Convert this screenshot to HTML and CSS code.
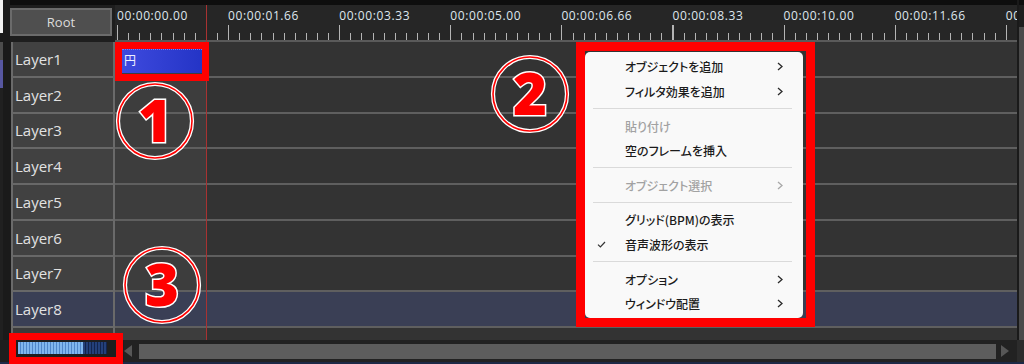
FILE: index.html
```html
<!DOCTYPE html>
<html lang="ja">
<head>
<meta charset="utf-8">
<title>Timeline</title>
<link rel="stylesheet" href="styles.css">
</head>
<body>
<div class="app">
  <div class="header">
    <div class="edge edge-top"></div>
    <div class="root-cell"><div class="root-btn">Root</div></div>
    <div class="ruler">
      <div class="ruler-labels">
        <span>00:00:00.00</span><span>00:00:01.66</span><span>00:00:03.33</span><span>00:00:05.00</span><span>00:00:06.66</span><span>00:00:08.33</span><span>00:00:10.00</span><span>00:00:11.66</span><span>00:00:13.33</span>
      </div>
    </div>
    <div class="vs vs-top"></div>
  </div>

  <div class="body">
    <div class="edge edge-body"></div>
    <div class="tracks">
      <div class="row"><div class="label">Layer1</div><div class="track"><div class="clip">円</div></div></div>
      <div class="row"><div class="label">Layer2</div><div class="track"></div></div>
      <div class="row"><div class="label">Layer3</div><div class="track"></div></div>
      <div class="row"><div class="label">Layer4</div><div class="track"></div></div>
      <div class="row"><div class="label">Layer5</div><div class="track"></div></div>
      <div class="row"><div class="label">Layer6</div><div class="track"></div></div>
      <div class="row"><div class="label">Layer7</div><div class="track"></div></div>
      <div class="row sel"><div class="label">Layer8</div><div class="track"></div></div>
      <div class="row partial"><div class="label"></div><div class="track"></div></div>
    </div>
    <div class="vs"></div>
  </div>

  <div class="hscroll">
    <div class="zoom-cell">
      <div class="zoom-bar"><span class="zoom-fill"></span><span class="zoom-rest"></span></div>
    </div>
    <div class="sb-left"></div>
    <div class="thumb"></div>
    <div class="sb-right"></div>
    <div class="sb-corner"></div>
  </div>
  <div class="bottom-line"></div>

  <div class="cursor"></div>

  <div class="mark mark-clip"></div>
  <div class="mark mark-zoom"></div>

  <div class="mark menu-frame">
    <div class="menu">
      <div class="item"><span class="check"></span><span class="text">オブジェクトを追加</span><svg class="chev" width="6" height="9" viewBox="0 0 6 9"><path d="M1 1 L5 4.5 L1 8" fill="none" stroke="#2a2a2a" stroke-width="1.3"/></svg></div>
      <div class="item"><span class="check"></span><span class="text">フィルタ効果を追加</span><svg class="chev" width="6" height="9" viewBox="0 0 6 9"><path d="M1 1 L5 4.5 L1 8" fill="none" stroke="#2a2a2a" stroke-width="1.3"/></svg></div>
      <div class="sep"></div>
      <div class="item disabled"><span class="check"></span><span class="text">貼り付け</span></div>
      <div class="item"><span class="check"></span><span class="text">空のフレームを挿入</span></div>
      <div class="sep"></div>
      <div class="item disabled"><span class="check"></span><span class="text">オブジェクト選択</span><svg class="chev" width="6" height="9" viewBox="0 0 6 9"><path d="M1 1 L5 4.5 L1 8" fill="none" stroke="#a8a8a8" stroke-width="1.3"/></svg></div>
      <div class="sep"></div>
      <div class="item"><span class="check"></span><span class="text">グリッド(BPM)の表示</span></div>
      <div class="item"><span class="check"><svg width="9" height="7" viewBox="0 0 9 7"><path d="M1 3.6 L3.4 6 L8 1" fill="none" stroke="#333" stroke-width="1.2"/></svg></span><span class="text">音声波形の表示</span></div>
      <div class="sep"></div>
      <div class="item"><span class="check"></span><span class="text">オプション</span><svg class="chev" width="6" height="9" viewBox="0 0 6 9"><path d="M1 1 L5 4.5 L1 8" fill="none" stroke="#2a2a2a" stroke-width="1.3"/></svg></div>
      <div class="item"><span class="check"></span><span class="text">ウィンドウ配置</span><svg class="chev" width="6" height="9" viewBox="0 0 6 9"><path d="M1 1 L5 4.5 L1 8" fill="none" stroke="#2a2a2a" stroke-width="1.3"/></svg></div>
    </div>
  </div>

  <svg class="badge badge-1" width="80" height="80" viewBox="0 0 80 80">
    <circle cx="40" cy="40" r="37" fill="none" stroke="#ffffff" stroke-width="4.2"/>
    <circle cx="40" cy="40" r="37" fill="none" stroke="#ff0000" stroke-width="1.6"/>
    <text x="40" y="61" text-anchor="middle" class="num">1</text>
  </svg>
  <svg class="badge badge-2" width="80" height="80" viewBox="0 0 80 80">
    <circle cx="40" cy="40" r="37" fill="none" stroke="#ffffff" stroke-width="4.2"/>
    <circle cx="40" cy="40" r="37" fill="none" stroke="#ff0000" stroke-width="1.6"/>
    <text x="40" y="61" text-anchor="middle" class="num">2</text>
  </svg>
  <svg class="badge badge-3" width="80" height="80" viewBox="0 0 80 80">
    <circle cx="40" cy="40" r="37" fill="none" stroke="#ffffff" stroke-width="4.2"/>
    <circle cx="40" cy="40" r="37" fill="none" stroke="#ff0000" stroke-width="1.6"/>
    <text x="40" y="61" text-anchor="middle" class="num">3</text>
  </svg>
</div>
</body>
</html>
```

FILE: styles.css
```css
* { box-sizing: border-box; }
html, body { margin: 0; padding: 0; }
body {
  width: 1024px;
  height: 364px;
  overflow: hidden;
  background: #1c1c1c;
  font-family: "Open Sans", "Noto Sans", sans-serif;
}
.app {
  position: relative;
  width: 1024px;
  height: 364px;
  display: flex;
  flex-direction: column;
  background: #1c1c1c;
}

/* header */
.header { height: 42px; display: flex; flex-shrink: 0; }
.edge { width: 10px; flex-shrink: 0; background: #1a1a1a; }
.edge-top {
  background:
    linear-gradient(#1a1a1a, #1a1a1a) 3px 0 / 7px 100% no-repeat,
    linear-gradient(#f2f2f2 0 33px, #1a1a1a 33px);
}
.edge-body {
  background:
    linear-gradient(#1a1a1a, #1a1a1a) 3px 0 / 7px 100% no-repeat,
    linear-gradient(#4c4c4c 0 18px, #5656a0 18px 46px, #202020 46px);
}
.root-cell {
  width: 105px;
  flex-shrink: 0;
  background: #1e1e1e;
  border-top: 5px solid #0e0e0e;
  padding-top: 3px;
}
.root-btn {
  width: 102px;
  height: 28px;
  background: #4f4f4f;
  border: 2px solid #6b6b6b;
  color: #dcdcdc;
  font-size: 13px;
  line-height: 24px;
  text-align: center;
}
.ruler {
  flex: 1;
  overflow: hidden;
  background-color: #262626;
  border-top: 5px solid #0e0e0e;
  border-bottom: 2px solid #5a5a5a;
  padding: 3px 0 0 2px;
  background-image:
    repeating-linear-gradient(90deg, #b4b4b4 0 1px, transparent 1px 11.11px),
    repeating-linear-gradient(90deg, #b4b4b4 0 1px, transparent 1px 111.1px);
  background-size: 100% 7px, 100% 15px;
  background-position: 2px 28px, 2px 20px;
  background-repeat: no-repeat;
}
.ruler-labels { display: flex; }
.ruler-labels span {
  flex: 0 0 111.1px;
  color: #dfe6ee;
  font-size: 12px;
  letter-spacing: 0.6px;
  line-height: 16px;
  white-space: nowrap;
}
.vs {
  width: 7px;
  flex-shrink: 0;
  background: #4a4a4a;
  border-left: 2px solid #1a1a1a;
}
.vs-top {
  background: linear-gradient(#0e0e0e 0 5px, #1e1e1e 5px 27px, #4a4a4a 27px);
}

/* body / tracks */
.body { height: 298px; display: flex; flex-shrink: 0; }
.tracks { width: 1007px; display: flex; flex-direction: column; }
.row { display: flex; height: 35.75px; flex-shrink: 0; }
.label {
  width: 104px;
  margin-left: 1px;
  flex-shrink: 0;
  background: #414141;
  border-left: 2px solid #6a6a6a;
  border-right: 2px solid #6a6a6a;
  border-bottom: 2px solid #686868;
  color: #e2e2e2;
  font-size: 15px;
  font-weight: 500;
  padding-left: 2px;
  display: flex;
  align-items: center;
}
.track {
  flex: 1;
  display: flex;
  align-items: flex-start;
  border-bottom: 2px solid #5f5f5f;
  background: linear-gradient(90deg, #3d3d3d 0 91px, #333333 91px);
}
.row.sel .label, .row.sel .track { background: #3a3f55; }
.row.partial { height: 12px; }
.row.partial .label { border-bottom: 0; background: #3b3b3b; }
.row.partial .track { border-bottom: 0; }

.clip {
  margin: 7px 0 0 7px;
  width: 80px;
  height: 24px;
  background: linear-gradient(90deg, #3e4ade, #2434c6);
  border-top: 1px dotted #7080ff;
  color: #eef0ff;
  font-family: "Noto Sans CJK JP", sans-serif;
  font-size: 12px;
  line-height: 20px;
  padding-left: 2px;
}

/* horizontal scroll */
.hscroll {
  height: 22px;
  display: flex;
  align-items: center;
  flex-shrink: 0;
  background: #222222;
}
.zoom-cell {
  width: 124px;
  align-self: stretch;
  padding: 2px 0 0 18px;
  background: #1e1e1e;
}
.zoom-bar { display: flex; width: 89px; height: 12px; }
.zoom-fill {
  width: 65px;
  background: repeating-linear-gradient(90deg, #80b6ee 0 2px, #4f86c9 2px 3px);
}
.zoom-rest {
  flex: 1;
  background: repeating-linear-gradient(90deg, #24407a 0 2px, #13244d 2px 3px);
}
.sb-left {
  width: 0; height: 0;
  border-right: 8px solid #575757;
  border-top: 6.5px solid transparent;
  border-bottom: 6.5px solid transparent;
  margin-right: 7px;
}
.thumb { flex: 1; height: 15px; background: #5d5d5d; margin-right: 5px; }
.sb-right {
  width: 0; height: 0;
  border-left: 8px solid #575757;
  border-top: 6.5px solid transparent;
  border-bottom: 6.5px solid transparent;
  margin-right: 8px;
}
.sb-corner { width: 7px; align-self: stretch; background: #2c2c2c; }
.bottom-line { height: 2px; background: #1d2946; flex-shrink: 0; }

/* overlays */
.cursor {
  position: absolute;
  left: 206px;
  top: 5px;
  width: 1px;
  height: 335px;
  background: #a83232;
}
.mark { position: absolute; border: 7px solid #ff0000; }
.mark-clip { left: 115px; top: 42px; width: 94px; height: 39px; }
.mark-zoom { left: 9px; top: 333px; width: 114px; height: 31px; }
.menu-frame { left: 576px; top: 42px; width: 239px; height: 285px; border-width: 9px; }

.menu {
  margin-top: 1px;
  width: 218px;
  height: 266px;
  background: #f9f9f9;
  border-radius: 5px;
  padding: 2.5px 0;
  font-family: "Noto Sans CJK JP", "Noto Sans", sans-serif;
  font-feature-settings: "palt" 1;
  font-size: 12px;
  font-weight: 500;
  color: #1b1b1b;
}
.item {
  height: 24.75px;
  display: flex;
  align-items: center;
  padding-right: 20px;
}
.item.disabled { color: #a2a2a2; }
.check {
  width: 28px;
  margin-left: 12px;
  display: flex;
  align-items: center;
}
.text { flex: 1; white-space: nowrap; }
.chev { display: block; }
.sep {
  height: 9.75px;
  margin: 0 11px 0 8px;
  background: linear-gradient(transparent 0 4.4px, #dadada 4.4px 5.4px, transparent 5.4px);
}

.badge { position: absolute; overflow: visible; }
.badge-1 { left: 115px; top: 81px; }
.badge-2 { left: 490px; top: 54px; }
.badge-3 { left: 122px; top: 245px; }
.num {
  font-family: "Open Sans", "Noto Sans", sans-serif;
  font-weight: 800;
  font-size: 58px;
  fill: #ff0000;
  stroke: #ffffff;
  stroke-width: 3px;
  paint-order: stroke;
}
```
